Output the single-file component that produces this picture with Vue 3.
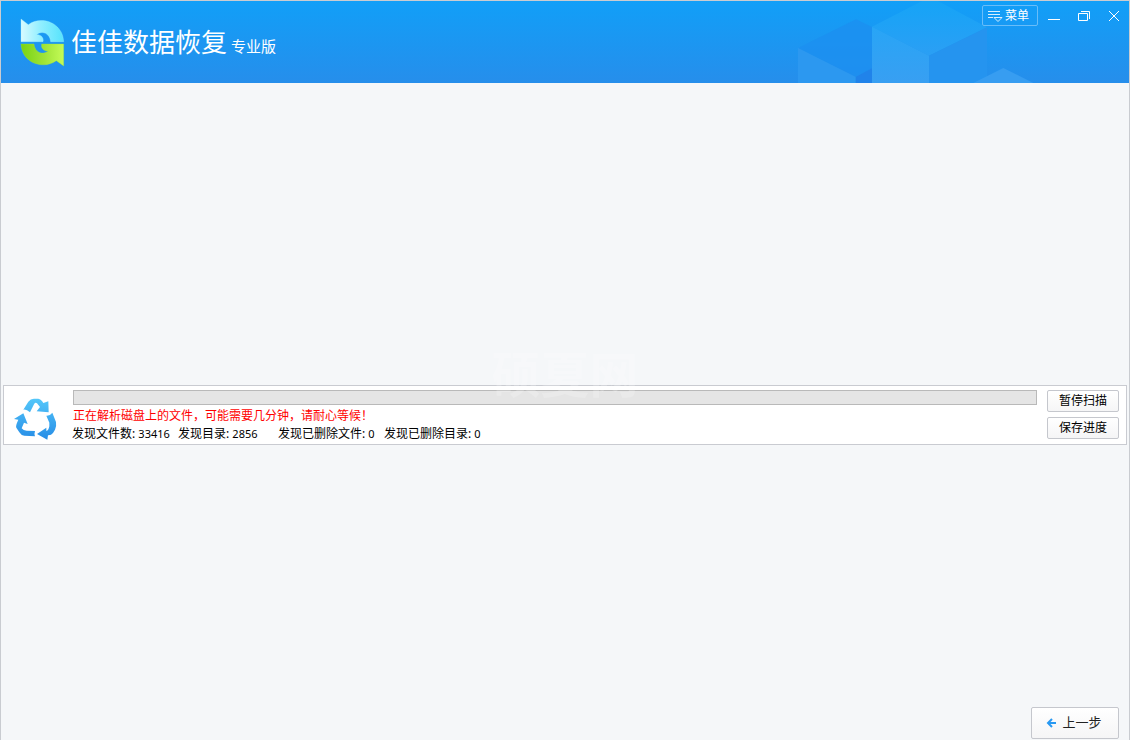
<script setup>
import { ref } from 'vue'

const progress = ref(0)
const stats = [
  { label: '发现文件数', value: 33416 },
  { label: '发现目录', value: 2856 },
  { label: '发现已删除文件', value: 0 },
  { label: '发现已删除目录', value: 0 },
]
</script>

<template>
  <div class="window">
    <header class="header">
      <svg class="cubes" viewBox="0 0 1050 249" aria-hidden="true">
        <defs>
          <linearGradient id="face" x1="0" y1="0" x2="0" y2="1">
            <stop offset="0" stop-color="#28a5f6" />
            <stop offset="1" stop-color="#389ff2" />
          </linearGradient>
          <linearGradient id="top" x1="0" y1="0" x2="0" y2="1">
            <stop offset="0" stop-color="#15a4f7" />
            <stop offset="1" stop-color="#2b9ff4" />
          </linearGradient>
        </defs>
        <path d="M54 144 228 58 276 81V205L228 230Z" fill="#1c8ff0" opacity=".75" />
        <path d="M54 144 226 230V249H54Z" fill="#2c98f0" />
        <path d="M228 230 276 205V249H228Z" fill="#2083ea" />
        <path d="M276 80 432 0H468L621 82 447 167Z" fill="url(#top)" />
        <path d="M276 80 447 167V249H276Z" fill="url(#face)" />
        <path d="M447 167 621 82V249H447Z" fill="#2594ef" />
        <path d="M580 249 670 204 760 249Z" fill="#379df1" />
      </svg>

      <div class="brand">
        <svg class="logo" viewBox="0 0 135 147" aria-hidden="true">
          <defs>
            <linearGradient id="cyan" x1="0" y1="0" x2="1" y2="0">
              <stop offset="0" stop-color="#d8fbff" />
              <stop offset=".45" stop-color="#92efff" />
              <stop offset="1" stop-color="#55e3fc" />
            </linearGradient>
            <linearGradient id="green" x1="0" y1="0" x2="1" y2="0">
              <stop offset="0" stop-color="#79d313" />
              <stop offset=".55" stop-color="#a0e438" />
              <stop offset="1" stop-color="#c4fb57" />
            </linearGradient>
          </defs>
          <path d="M3 3 25 20C62-8 128 12 131 71H92C90 46 66 36 50 50 63 49 72 59 69 71H3Z" fill="url(#cyan)" stroke="#a9f4ff" stroke-width="1" />
          <path d="M3 78H42C44 103 68 113 84 99 71 100 62 90 65 78H131V144L109 128C73 155 6 138 3 78Z" fill="url(#green)" stroke="#a5e838" stroke-width="1" />
        </svg>
        <h1 class="title">佳佳数据恢复</h1>
        <span class="edition">专业版</span>
      </div>

      <div class="controls">
        <button class="menu" type="button">
          <svg width="15" height="14" viewBox="0 0 15 14" fill="none" stroke="#d7efff" aria-hidden="true">
            <path d="M0 2.5H12M0 5.5H12M0 8.5H5" />
            <path d="M6 8.5H14L10 12.5Z" />
          </svg>
          <span>菜单</span>
        </button>
        <button class="control" type="button" aria-label="最小化">
          <svg width="14" height="14" viewBox="0 0 14 14" stroke="#fff" aria-hidden="true"><path d="M1 10.5H13" /></svg>
        </button>
        <button class="control" type="button" aria-label="还原">
          <svg width="14" height="14" viewBox="0 0 14 14" fill="none" stroke="#fff" aria-hidden="true">
            <path d="M1.5 4.5H10.5V11.5H1.5ZM4 2.5H12.5V10" />
          </svg>
        </button>
        <button class="control" type="button" aria-label="关闭">
          <svg width="14" height="14" viewBox="0 0 14 14" stroke="#fff" aria-hidden="true"><path d="M2 2 12 12M12 2 2 12" /></svg>
        </button>
      </div>
    </header>

    <main class="content">
      <section class="panel">
        <svg class="recycle" viewBox="0 0 168 162" aria-hidden="true">
          <defs>
            <linearGradient id="blue" gradientUnits="userSpaceOnUse" x1="0" y1="24" x2="0" y2="150">
              <stop offset="0" stop-color="#55c8fa" />
              <stop offset="1" stop-color="#268ce6" />
            </linearGradient>
          </defs>
          <g fill="url(#blue)">
            <path d="M46 59 61 35Q68 25 80 26H91Q99 27 106 39L121 34 122 67 86 64 96 51 87 40Q82 36 78 43L66 67Q55 57 46 59Z" />
            <path d="M18 87 46 70 59 102 48 98 41 115Q46 122 56 122L81 123Q78 131 81 139L49 137Q39 136 34 127L25 113Q22 108 31 89Z" />
            <path d="M115 77Q126 78 133 68L144 96Q146 107 141 119L135 129Q129 137 120 136L118 149 87 132 115 113 115 123Q122 121 124 109V98Z" />
          </g>
        </svg>

        <div class="status">
          <progress class="bar" :value="progress" max="100" aria-label="扫描进度"></progress>
          <p class="notice">正在解析磁盘上的文件，可能需要几分钟，请耐心等候！</p>
          <ul class="stats">
            <li v-for="item in stats" :key="item.label">{{ item.label }}: <span class="value">{{ item.value }}</span></li>
          </ul>
        </div>

        <div class="actions">
          <button class="button" type="button">暂停扫描</button>
          <button class="button" type="button">保存进度</button>
        </div>
        <div class="watermark" aria-hidden="true">硕夏网</div>
      </section>

      <footer class="footer">
        <button class="button back" type="button">
          <svg width="11" height="12" viewBox="0 0 11 12" fill="none" stroke="#2899f2" stroke-width="2" aria-hidden="true">
            <path d="M6 2 2 6 6 10M2 6H10" />
          </svg>
          <span>上一步</span>
        </button>
      </footer>
    </main>
  </div>
</template>

<style>
body {
  margin: 0;
}
</style>

<style scoped>
.window {
  box-sizing: border-box;
  display: flex;
  flex-direction: column;
  min-height: 100vh;
  border: 1px solid #c9ccd1;
  border-bottom: 0;
  background: #f5f7f9;
  color: #000;
  font: 12px/18px "Liberation Sans", "Noto Sans CJK SC", sans-serif;
}
button {
  padding: 0;
  font: inherit;
  cursor: pointer;
}
svg {
  display: block;
  flex: none;
}
.header {
  position: relative;
  display: flex;
  justify-content: space-between;
  height: 82px;
  overflow: hidden;
  background: linear-gradient(#119ff8, #268eeb);
  color: #fff;
}
.cubes {
  position: absolute;
  right: -1px;
  bottom: 0;
  width: 350px;
  height: 83px;
}
.brand {
  position: relative;
  display: flex;
  align-items: center;
  padding-left: 19px;
}
.logo {
  width: 45px;
  height: 49px;
}
.title {
  margin: 0 4px 0 6px;
  padding-top: 2px;
  font-size: 26px;
  font-weight: 400;
  line-height: 40px;
}
.edition {
  padding-top: 9px;
  font-size: 15px;
  line-height: 20px;
}
.controls {
  position: relative;
  display: flex;
  gap: 16px;
  padding: 4px 8px 0 0;
  height: 21px;
}
.menu {
  box-sizing: border-box;
  display: flex;
  align-items: center;
  gap: 2px;
  width: 56px;
  height: 21px;
  margin-right: -7px;
  padding-left: 5px;
  border: 1px solid #69bdf9;
  border-radius: 2px;
  background: transparent;
  color: #fff;
}
.control {
  display: flex;
  align-items: center;
  width: 14px;
  height: 21px;
  border: 0;
  background: transparent;
}
.content {
  flex: 1;
  display: grid;
  grid-template-rows: 1fr auto 1fr;
  padding: 7px 2px 0;
}
.panel {
  position: relative;
  grid-row: 2;
  display: flex;
  padding: 4px 7px 0 4px;
  border: 1px solid #c9cbd1;
  background: #fff;
}
.recycle {
  width: 56px;
  height: 54px;
}
.status {
  flex: 1;
  min-width: 0;
  padding: 0 10px 0 9px;
}
.bar {
  appearance: none;
  box-sizing: border-box;
  display: block;
  width: 100%;
  height: 15px;
  border: 1px solid #b9b9b9;
  background: #e5e5e5;
}
.bar::-webkit-progress-bar {
  background: #e5e5e5;
}
.bar::-webkit-progress-value {
  background: #2899f2;
}
.notice {
  margin: 2px 0 0;
  color: #f00;
}
.stats {
  display: grid;
  grid-template-columns: 106px 100px 106px auto;
  margin: 0 0 0 -1px;
  padding: 0;
  list-style: none;
  font-family: "Noto Sans", "Noto Sans CJK SC", sans-serif;
}
.value {
  font-size: 11px;
}
.actions {
  display: flex;
  flex-direction: column;
  gap: 5px;
  width: 72px;
}
.button {
  box-sizing: border-box;
  height: 22px;
  border: 1px solid #c5c7cd;
  border-radius: 2px;
  background: linear-gradient(#fff, #f5f5f6);
  color: #000;
}
.watermark {
  position: absolute;
  left: 50%;
  bottom: 38px;
  transform: translateX(-50%);
  color: rgba(255, 255, 255, 0.2);
  font-size: 49px;
  font-weight: 700;
  line-height: 60px;
  pointer-events: none;
}
.footer {
  grid-row: 3;
  display: flex;
  align-items: flex-end;
  justify-content: flex-end;
  padding: 0 8px 1px 0;
}
.back {
  display: flex;
  align-items: center;
  justify-content: center;
  gap: 5px;
  width: 88px;
  height: 32px;
  padding-right: 2px;
  color: #222;
  font-size: 13px;
}
</style>
